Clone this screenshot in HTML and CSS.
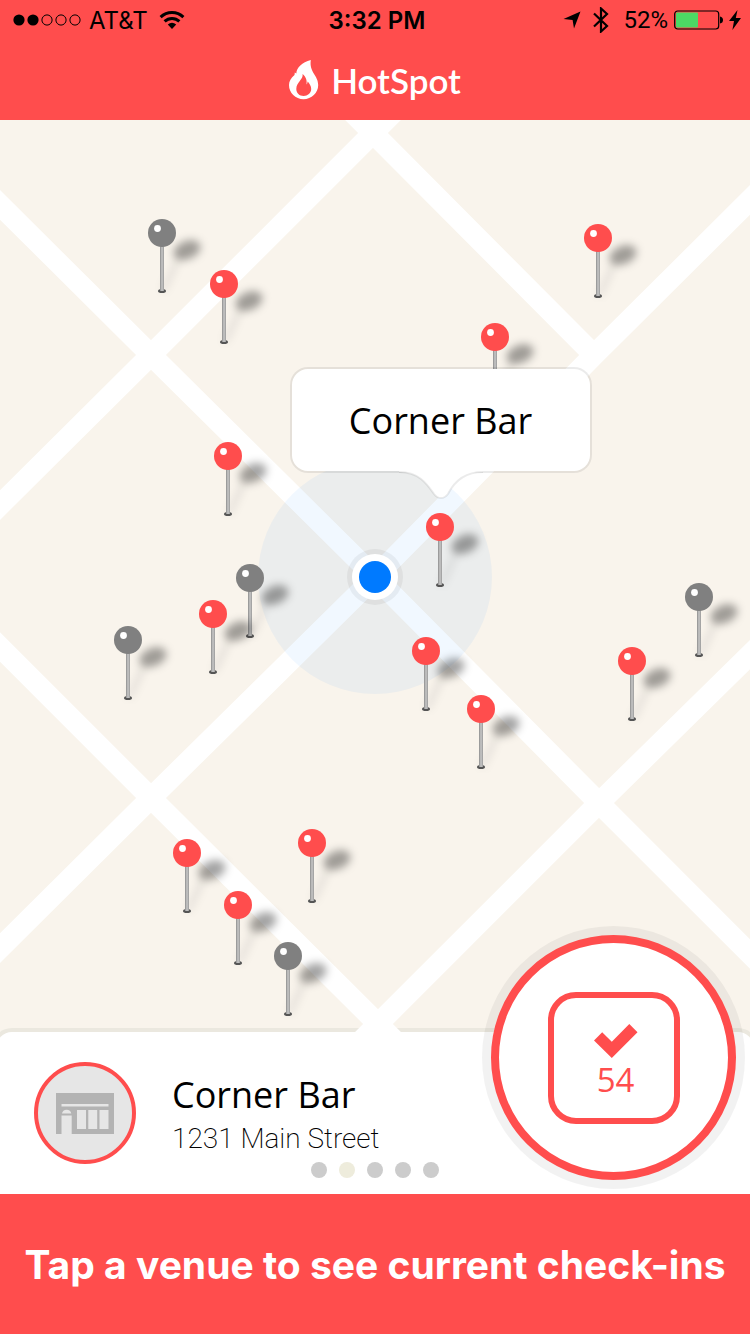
FILE: index.html
```
<!DOCTYPE html>
<html lang="en">
<head>
    <meta charset="UTF-8">
    <meta name="viewport" content="width=device-width, initial-scale=1.0">
    <title>HotSpot</title>
    <link rel="stylesheet" href="styles.css">
</head>
<body>
    <header class="header">
        <div class="status-bar">
            <div class="status-left">
                <svg width="68" height="14" viewBox="0 0 68 14">
                    <circle cx="6" cy="7" r="5.6"/>
                    <circle cx="20" cy="7" r="5.6"/>
                    <g fill="none" stroke="#000">
                        <circle cx="34" cy="7" r="5.1"/>
                        <circle cx="48" cy="7" r="5.1"/>
                        <circle cx="62" cy="7" r="5.1"/>
                    </g>
                </svg>
                <span>AT&amp;T</span>
                <svg class="wifi" width="26" height="20" viewBox="0 0 26 20">
                    <g fill="none" stroke="#000" stroke-width="3">
                        <path d="M1.600 7.200C8 1 18 1 24.400 7.200"/>
                        <path d="M5.600 11.400C9.800 7.400 16.200 7.400 20.400 11.400"/>
                    </g>
                    <path d="M8.800 14.600Q13 11 17.200 14.600L13 19Z"/>
                </svg>
            </div>
            <span class="status-time">3:32 PM</span>
            <div class="status-right">
                <svg width="18" height="18" viewBox="0 0 18 18"><path d="M17.500 .5L11 17.500L9.600 9L.5 8Z"/></svg>
                <svg class="bluetooth" width="16" height="26" viewBox="0 0 16 26">
                    <path d="M1 6.500L14 19L8 24.500V1.500L14 7L1 19.500" fill="none" stroke="#000" stroke-width="2.200"/>
                </svg>
                <span class="battery-level">52%</span>
                <svg class="battery" width="50" height="20" viewBox="0 0 50 20">
                    <rect x=".7" y="1" width="44" height="18" rx="3" fill="none" stroke="#000" stroke-width="1.200"/>
                    <rect x="2" y="2.500" width="22" height="15" rx="1" fill="#4cd964"/>
                    <path d="M46 6.500Q49 7 49 10Q49 13 46 13.500Z"/>
                </svg>
                <svg width="12" height="20" viewBox="0 0 12 20"><path d="M8.500 0L0 11H5L3.400 20L12 8H6.800Z"/></svg>
            </div>
        </div>
        <h1 class="brand">
            <svg width="30" height="40" viewBox="0 0 30 40">
                <path d="M21.800 0C13 2.500 7.500 7.500 7.300 13.500L5.800 12.400L5.500 15C2 18 0 21 0 25C0 33 6.500 39.200 14.500 39.200S29.200 33 29.200 25C29.200 15 20 12.500 21.800 0Z" fill="#fff"/>
                <path d="M13.600 14C14.500 19.500 7.300 22 7.300 29C7.300 33.200 10.500 36 14.600 36S22.200 33 22.200 29C22.200 26 20.500 23.500 18.600 21.500Q18.500 23.500 17.500 24.500C18.300 20 16.500 16.500 13.600 14Z" fill="#ff4d4d"/>
            </svg>
            HotSpot
        </h1>
    </header>

    <main class="content">
        <section class="map" id="map">
            <svg class="map-canvas" viewBox="0 0 750 924" preserveAspectRatio="xMidYMid slice">
                <rect width="750" height="924" fill="#f9f4ec"/>
                <!-- edge around the venue card -->
                <rect x="-8" y="908" width="766" height="60" rx="20" fill="#ebe8df"/>
                <g fill="none" stroke="#fff" stroke-width="21">
                    <path d="M-20 65L151 235L375 457L599 683L770 854"/>
                    <path d="M340 -20L373 13L594 235"/>
                    <path d="M-20 507L151 678L378 904L400 926"/>
                    <path d="M406 -20L373 13L151 235L-20 405"/>
                    <path d="M770 60L594 235L375 457L151 678L-20 848"/>
                    <path d="M770 515L599 683L378 904L356 926"/>
                </g>
                <circle cx="375" cy="457" r="117" fill="#007aff" fill-opacity=".055"/>
                <circle cx="375" cy="457" r="28" fill="#000" fill-opacity=".05"/>
                <circle cx="375" cy="457" r="23" fill="#fff"/>
                <circle cx="375" cy="457" r="16" fill="#007aff"/>
            </svg>
            <div class="callout">
                Corner Bar
                <svg class="callout-tail" width="84" height="30" viewBox="0 0 84 30">
                    <path d="M0 0V2C20 2 28 14 35 24Q38 28 42 28T49 24C54 14 64 2 84 2V0Z" fill="#fff"/>
                    <path d="M0 2C20 2 28 14 35 24Q38 28 42 28T49 24C54 14 64 2 84 2" fill="none" stroke="#000" stroke-opacity=".08" stroke-width="2"/>
                </svg>
            </div>
        </section>

        <section class="venue-card">
            <div class="venue-photo">
                <svg width="58" height="41" viewBox="0 0 58 41">
                    <path d="M0 0H58V41H0Z" fill="#b3b3b3"/>
                    <path d="M5.500 11H52.500V13.500H5.500ZM21 17H30V36H21ZM32.300 17H41.200V36H32.300ZM43.500 17H52.500V36H43.500ZM6 20.500A4.700 4.500 0 0 1 15.300 20.500ZM5.500 22.500H15.700V41H5.500Z" fill="#e6e6e6"/>
                </svg>
            </div>
            <div class="venue-info">
                <h2>Corner Bar</h2>
                <p>1231 Main Street</p>
            </div>
            <button class="checkin-btn" aria-label="Check in, 54 here now">
                <span class="checkin-box">
                    <svg width="44" height="34" viewBox="0 0 44 34"><path d="M0 16.500L8.200 8.300L17.800 17.800L35.300 0L43.500 8.200L17.800 34Z" fill="#ff4d4d"/></svg>
                    <span>54</span>
                </span>
            </button>
            <nav class="pager">
                <button aria-label="Venue 1"></button>
                <button class="active" aria-label="Venue 2"></button>
                <button aria-label="Venue 3"></button>
                <button aria-label="Venue 4"></button>
                <button aria-label="Venue 5"></button>
            </nav>
        </section>
    </main>

    <footer class="footer">Tap a venue to see current check-ins</footer>

    <svg class="defs" width="0" height="0">
        <defs>
            <filter id="soft" x="-50%" y="-50%" width="200%" height="200%"><feGaussianBlur stdDeviation="4"/></filter>
            <linearGradient id="steel">
                <stop offset="0" stop-color="#8c8c8c"/>
                <stop offset=".5" stop-color="#c8c8c8"/>
                <stop offset="1" stop-color="#999"/>
            </linearGradient>
            <symbol id="pin" viewBox="0 0 68 80">
                <g filter="url(#soft)">
                    <ellipse cx="41" cy="33" rx="14" ry="9" transform="rotate(-22 41 33)" fill-opacity=".36"/>
                    <path d="M17 74L34 38" stroke="#000" stroke-width="4" stroke-opacity=".12"/>
                </g>
                <ellipse cx="16" cy="74" rx="4" ry="2" fill="#555"/>
                <rect x="14" y="28" width="4" height="46" fill="url(#steel)"/>
                <circle cx="16" cy="16" r="14" fill="currentColor"/>
                <circle cx="11.500" cy="11.500" r="3.400" fill="#fff"/>
            </symbol>
        </defs>
    </svg>

    <script>
        const map = document.getElementById("map");

        // x / y of the pin heads on the 750 x 924 map
        const venues = [
            { x: 162, y: 113, quiet: true },
            { x: 224, y: 164 },
            { x: 598, y: 118 },
            { x: 495, y: 217 },
            { x: 228, y: 336 },
            { x: 440, y: 407 },
            { x: 250, y: 458, quiet: true },
            { x: 213, y: 494 },
            { x: 128, y: 520, quiet: true },
            { x: 699, y: 477, quiet: true },
            { x: 632, y: 541 },
            { x: 426, y: 531 },
            { x: 481, y: 589 },
            { x: 187, y: 733 },
            { x: 312, y: 723 },
            { x: 238, y: 785 },
            { x: 288, y: 836, quiet: true }
        ];

        venues.forEach((venue, i) => {
            const pin = document.createElement("button");
            pin.className = venue.quiet ? "pin pin-quiet" : "pin";
            pin.setAttribute("aria-label", "Venue pin " + (i + 1));
            pin.style.left = (venue.x / 750 * 100) + "%";
            pin.style.top = (venue.y / 924 * 100) + "%";
            pin.innerHTML = '<svg width="68" height="80"><use href="#pin"/></svg>';
            map.appendChild(pin);
        });
    </script>
</body>
</html>
```
FILE: styles.css
```
* {
    box-sizing: border-box;
    margin: 0;
    padding: 0;
}
body {
    display: flex;
    flex-direction: column;
    min-height: 100vh;
    overflow-x: hidden;
    font-family: 'Open Sans', sans-serif;
    background-color: #fff;
    color: #000;
}
button {
    border: none;
    background: none;
    cursor: pointer;
}
svg {
    display: block;
    flex-shrink: 0;
}
.header {
    height: 120px;
    background-color: #ff4d4d;
}
.status-bar {
    display: grid;
    grid-template-columns: 1fr auto 1fr;
    align-items: center;
    height: 40px;
    padding: 0 9px 0 13px;
    font-family: 'Inter', sans-serif;
    font-size: 24px;
}
.status-left, .status-right {
    display: flex;
    align-items: center;
}
.status-left {
    gap: 8px;
}
.status-right {
    justify-content: flex-end;
}
.status-time {
    font-weight: 600;
}
.wifi {
    margin-left: 3px;
}
.bluetooth {
    margin: 0 14px 0 12px;
}
.battery-level {
    font-family: 'Roboto', sans-serif;
}
.battery {
    margin: 0 5px 0 6px;
}
.brand {
    display: flex;
    align-items: center;
    justify-content: center;
    gap: 12px;
    height: 80px;
    font-family: 'Lato', sans-serif;
    font-size: 35px;
    font-weight: 600;
    color: #fff;
}
.content {
    flex: 1;
    display: flex;
    flex-direction: column;
}
.map {
    position: relative;
    flex: 1;
    min-height: 400px;
    overflow: hidden;
}
.map-canvas {
    position: absolute;
    width: 100%;
    height: 100%;
}
.pin {
    position: absolute;
    margin: -16px 0 0 -16px;
    color: #ff4d4d;
}
.pin-quiet {
    color: #808080;
}
.callout {
    position: absolute;
    z-index: 2;
    top: 27%;
    left: 59%;
    display: flex;
    align-items: center;
    justify-content: center;
    width: 302px;
    height: 106px;
    margin: -2px 0 0 -153px;
    border: 2px solid rgba(0, 0, 0, 0.08);
    border-radius: 18px;
    background-color: #fff;
    background-clip: padding-box;
    font-size: 36px;
}
.callout-tail {
    position: absolute;
    top: 100%;
    left: 50%;
    margin: -1px 0 0 -42px;
}
.venue-card {
    position: relative;
    display: flex;
    align-items: flex-start;
    gap: 36px;
    height: 162px;
    margin: -12px -4px 0;
    padding: 30px 38px 0;
    border-radius: 16px 16px 0 0;
    background-color: #fff;
}
.venue-photo {
    display: flex;
    align-items: center;
    justify-content: center;
    width: 102px;
    height: 102px;
    border: 4px solid #ff4d4d;
    border-radius: 50%;
    background-color: #e6e6e6;
}
.venue-info {
    padding-top: 8px;
}
.venue-info h2 {
    font-size: 36px;
    font-weight: 400;
    line-height: 50px;
}
.venue-info p {
    font-family: 'Roboto', sans-serif;
    font-size: 28px;
    font-weight: 200;
    line-height: 38px;
}
.checkin-btn {
    position: absolute;
    z-index: 3;
    right: 18px;
    bottom: 14px;
    display: flex;
    align-items: center;
    justify-content: center;
    width: 245px;
    height: 245px;
    border: 8px solid #ff4d4d;
    border-radius: 50%;
    background-color: #fff;
    box-shadow: 0 0 0 9px rgba(0, 0, 0, 0.05);
}
.checkin-box {
    display: flex;
    flex-direction: column;
    align-items: center;
    width: 132px;
    height: 132px;
    padding: 26px 0 0 4px;
    border: 6px solid #ff4d4d;
    border-radius: 28px;
    font-family: 'Open Sans', sans-serif;
    font-size: 33px;
    line-height: 44px;
    color: #ff4d4d;
}
.pager {
    position: absolute;
    bottom: 16px;
    left: 50%;
    display: flex;
    gap: 12px;
    margin-left: -64px;
}
.pager button {
    width: 16px;
    height: 16px;
    border-radius: 50%;
    background-color: #ccc;
}
.pager .active {
    background-color: #eeecdc;
}
.footer {
    display: flex;
    align-items: center;
    justify-content: center;
    height: 140px;
    background-color: #ff4d4d;
    font-family: 'Inter', sans-serif;
    font-size: 39px;
    font-weight: 700;
    color: #fff;
}
.defs {
    position: absolute;
}
```
